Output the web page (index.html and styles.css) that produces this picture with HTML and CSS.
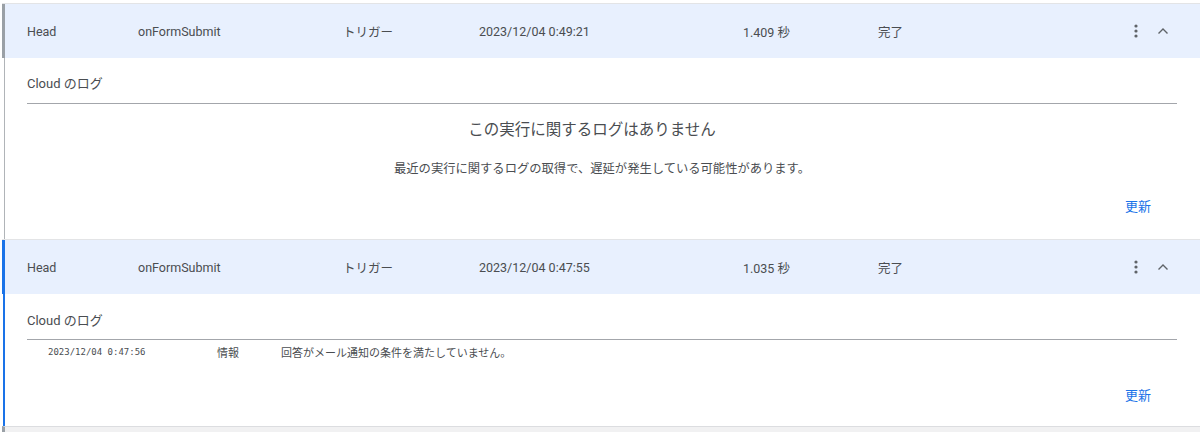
FILE: index.html
```html
<!DOCTYPE html>
<html lang="ja">
<head>
<meta charset="utf-8">
<link rel="stylesheet" href="styles.css">
</head>
<body>
<div class="list">
  <section class="card card-done">
    <div class="row">
      <span class="c-dep">Head</span>
      <span class="c-fn">onFormSubmit</span>
      <span class="c-type">トリガー</span>
      <span class="c-start">2023/12/04 0:49:21</span>
      <span class="c-dur">1.409 秒</span>
      <span class="c-status">完了</span>
      <span class="c-actions">
        <svg class="kebab" width="4" height="14" viewBox="0 0 4 14"><circle cx="2" cy="2" r="1.6"/><circle cx="2" cy="7" r="1.6"/><circle cx="2" cy="12" r="1.6"/></svg>
        <svg class="chev" width="12" height="8" viewBox="0 0 12 8"><path d="M1.5 6.5 L6 2 L10.5 6.5" fill="none" stroke-width="1.4"/></svg>
      </span>
    </div>
    <div class="body body-empty">
      <div class="log-title">Cloud のログ</div>
      <div class="empty">
        <p class="empty-h">この実行に関するログはありません</p>
        <p class="empty-s">最近の実行に関するログの取得で、遅延が発生している可能性があります。</p>
      </div>
      <div class="foot"><span class="refresh">更新</span></div>
    </div>
  </section>
  <section class="card card-active">
    <div class="row">
      <span class="c-dep">Head</span>
      <span class="c-fn">onFormSubmit</span>
      <span class="c-type">トリガー</span>
      <span class="c-start">2023/12/04 0:47:55</span>
      <span class="c-dur">1.035 秒</span>
      <span class="c-status">完了</span>
      <span class="c-actions">
        <svg class="kebab" width="4" height="14" viewBox="0 0 4 14"><circle cx="2" cy="2" r="1.6"/><circle cx="2" cy="7" r="1.6"/><circle cx="2" cy="12" r="1.6"/></svg>
        <svg class="chev" width="12" height="8" viewBox="0 0 12 8"><path d="M1.5 6.5 L6 2 L10.5 6.5" fill="none" stroke-width="1.4"/></svg>
      </span>
    </div>
    <div class="body body-log">
      <div class="log-title">Cloud のログ</div>
      <div class="log-row">
        <span class="l-time">2023/12/04 0:47:56</span>
        <span class="l-sev">情報</span>
        <span class="l-msg">回答がメール通知の条件を満たしていません。</span>
      </div>
      <div class="foot"><span class="refresh">更新</span></div>
    </div>
  </section>
  <section class="card card-next"></section>
</div>
</body>
</html>
```

FILE: styles.css
```css
* { box-sizing: border-box; }
html, body { margin: 0; padding: 0; background: #ffffff; }
body {
  font-family: Roboto, "Noto Sans CJK JP", sans-serif;
  color: #4a4d51;
  font-size: 13px;
  width: 1200px;
  height: 432px;
  overflow: hidden;
}
.list {
  padding: 3px 0 0 2px;
}
.card {
  border-top: 1px solid #e3e4e6;
}
.row {
  height: 54px;
  background: #e8f0fe;
  display: grid;
  grid-template-columns: 111px 205px 136px 264px 135px 1fr auto;
  align-items: center;
  padding-left: 22px;
  border-left: 3px solid #9aa0a6;
  font-size: 12.5px;
}
.card-active .row { border-left-color: #1a73e8; }
.c-actions {
  display: flex;
  align-items: center;
  gap: 19px;
  padding-right: 31px;
}
.kebab { fill: #5f6368; display: block; }
.chev { stroke: #5f6368; display: block; }
.body {
  margin-left: 2px;
  border-left: 1px solid #b0b4b8;
  padding: 0 23px 0 22px;
}
.card-active .body { border-left: 2px solid #1a73e8; margin-left: 1px; }
.body-empty { height: 181px; }
.body-log { height: 132px; }
.log-title {
  height: 46px;
  padding-top: 17px;
  line-height: 18px;
  border-bottom: 1px solid #a3a6ab;
  font-size: 13px;
}
.body-log .log-title { height: 46px; padding-top: 18px; }
.empty { text-align: center; }
.empty p { margin: 0; }
.empty-h {
  padding-top: 16px;
  padding-right: 20px;
  font-size: 15.5px;
  line-height: 20px;
}
.empty-s {
  padding-top: 19px;
  font-size: 12.3px;
  line-height: 20px;
}
.foot {
  display: flex;
  justify-content: flex-end;
  padding-right: 26px;
}
.body-empty .foot { padding-top: 18px; }
.body-log .foot { padding-top: 22px; }
.refresh {
  color: #1a73e8;
  font-size: 13px;
  line-height: 20px;
}
.log-row {
  display: flex;
  align-items: center;
  height: 24px;
  padding-left: 21px;
  font-size: 11px;
}
.l-time {
  font-family: "DejaVu Sans Mono", monospace;
  font-size: 9px;
  width: 169px;
}
.l-sev { width: 64px; }
.card-next {
  height: 10px;
  border-top: 1px solid #dcdde0;
  background: #f1f1f2;
  border-left: 3px solid #9aa0a6;
  margin-top: 0;
}
```
